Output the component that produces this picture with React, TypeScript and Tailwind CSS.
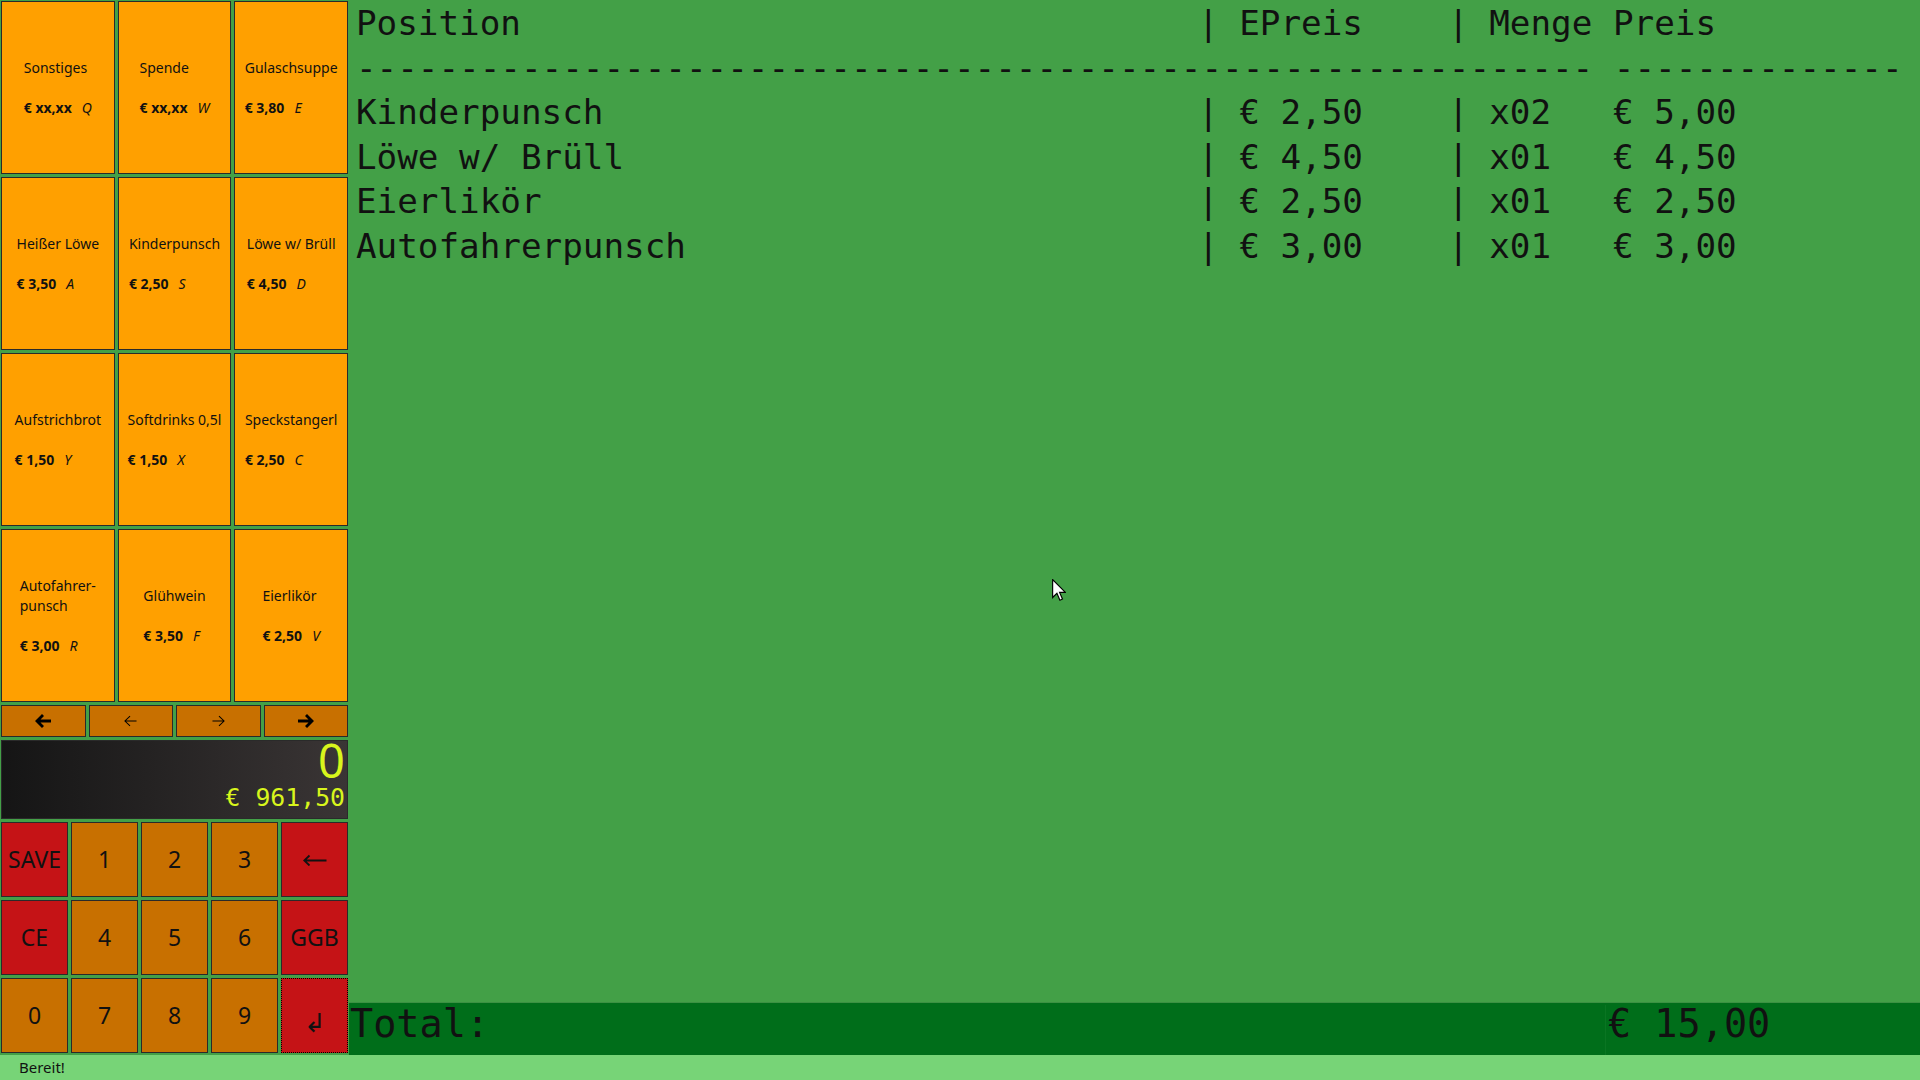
const ui = { fontFamily: '"Noto Sans", "Open Sans", sans-serif' }
const mono = { fontFamily: '"DejaVu Sans Mono", "Liberation Mono", monospace' }

const products = [
  { name: "Sonstiges", price: "€ xx,xx", key: "Q" },
  { name: "Spende", price: "€ xx,xx", key: "W" },
  { name: "Gulaschsuppe", price: "€ 3,80", key: "E" },
  { name: "Heißer Löwe", price: "€ 3,50", key: "A" },
  { name: "Kinderpunsch", price: "€ 2,50", key: "S" },
  { name: "Löwe w/ Brüll", price: "€ 4,50", key: "D" },
  { name: "Aufstrichbrot", price: "€ 1,50", key: "Y" },
  { name: "Softdrinks 0,5l", price: "€ 1,50", key: "X" },
  { name: "Speckstangerl", price: "€ 2,50", key: "C" },
  { name: "Autofahrer-\npunsch", price: "€ 3,00", key: "R" },
  { name: "Glühwein", price: "€ 3,50", key: "F" },
  { name: "Eierlikör", price: "€ 2,50", key: "V" },
]

const lines = [
  { name: "Kinderpunsch", ep: "€ 2,50", qty: "x02", total: "€ 5,00" },
  { name: "Löwe w/ Brüll", ep: "€ 4,50", qty: "x01", total: "€ 4,50" },
  { name: "Eierlikör", ep: "€ 2,50", qty: "x01", total: "€ 2,50" },
  { name: "Autofahrerpunsch", ep: "€ 3,00", qty: "x01", total: "€ 3,00" },
]

// receipt line: name | unit price | qty + price
function Line({ name, ep, rest }: { name: string; ep: string; rest: string }) {
  return (
    <div className="flex">
      <span className="w-[842px] shrink-0">{name}</span>
      <span className="w-[250px] shrink-0">{"| " + ep}</span>
      <span>{"| " + rest}</span>
    </div>
  )
}

function BoldArrow({ flip }: { flip?: boolean }) {
  return (
    <svg width="16" height="14" viewBox="0 0 16 14" className={flip ? "rotate-180" : ""}>
      <path d="M0 7 L7 0 L9 2 L5.5 5.5 H16 V8.5 H5.5 L9 12 L7 14 Z" fill="#000" />
    </svg>
  )
}

function ThinArrow({ flip }: { flip?: boolean }) {
  return (
    <svg width="13" height="12" viewBox="0 0 14 12" className={flip ? "rotate-180" : ""}>
      <path d="M13.5 6 H1 M6.5 0.7 L1 6 L6.5 11.3" fill="none" stroke="#000" strokeWidth="1.1" />
    </svg>
  )
}

function Key({ label, red, children }: { label?: string; red?: boolean; children?: React.ReactNode }) {
  return (
    <div
      className={`flex items-center justify-center border border-[#2a2a2a] ${red ? "bg-[#c51316]" : "bg-[#c87000]"} text-[23px] text-[#111]`}
      style={ui}
    >
      {children ?? label}
    </div>
  )
}

export default function App() {
  return (
    <div className="relative flex h-screen w-full flex-col overflow-hidden bg-[#43a047]">
      <div className="flex h-[1055px]">
        {/* left panel */}
        <div className="flex w-[348px] shrink-0 flex-col pl-[1px] pt-[1px]">
          <div className="grid grid-cols-3 gap-[3px]">
            {products.map((p) => (
              <div
                key={p.name}
                className="flex h-[173px] items-center justify-center border border-[#2a2a2a] bg-[#ffa000] text-[14px] leading-[20px] text-[#111]"
                style={ui}
              >
                <div className="text-left">
                  <div className="whitespace-pre">{p.name}</div>
                  <div className="mt-5 flex">
                    <span className="font-bold">{p.price}</span>
                    <span className="ml-2.5 italic">{p.key}</span>
                  </div>
                </div>
              </div>
            ))}
          </div>

          <div className="mt-[3px] grid h-[32px] grid-cols-4 gap-[3px]">
            <div className="flex items-center justify-center border border-[#2a2a2a] bg-[#c87000]"><BoldArrow /></div>
            <div className="flex items-center justify-center border border-[#2a2a2a] bg-[#c87000]"><ThinArrow /></div>
            <div className="flex items-center justify-center border border-[#2a2a2a] bg-[#c87000]"><ThinArrow flip /></div>
            <div className="flex items-center justify-center border border-[#2a2a2a] bg-[#c87000]"><BoldArrow flip /></div>
          </div>

          <div className="mt-[3px] flex h-[79px] flex-col items-end border border-[#2a2a2a] bg-gradient-to-r from-[#151515] to-[#3a3535] pr-[2px]">
            <div className="mt-[-3px] text-[47px] leading-[44px] font-normal text-[#d8f51c]" style={ui}>0</div>
            <div className="mt-[3px] text-[24.8px] leading-[26px] text-[#d8f51c]" style={mono}>€ 961,50</div>
          </div>

          <div className="mt-[3px] grid flex-1 grid-cols-5 grid-rows-3 gap-[3px] pb-[2px]">
            <Key label="SAVE" red />
            <Key label="1" />
            <Key label="2" />
            <Key label="3" />
            <Key red>
              <svg width="24" height="12" viewBox="0 0 24 12">
                <path d="M23.5 6.5 H1.5 M6.5 1.5 L1.2 6.5 L6.5 11.5" fill="none" stroke="#111" strokeWidth="1.8" />
              </svg>
            </Key>
            <Key label="CE" red />
            <Key label="4" />
            <Key label="5" />
            <Key label="6" />
            <Key label="GGB" red />
            <Key label="0" />
            <Key label="7" />
            <Key label="8" />
            <Key label="9" />
            <div className="flex items-center justify-center border border-dotted border-black bg-[#c51316] pt-[14px] text-[26px] text-[#111]" style={ui}>
              ↲
            </div>
          </div>
        </div>

        {/* receipt */}
        <div className="flex flex-1 flex-col pl-[1px]">
          <div className="flex-1 pl-[7px] text-[34.25px] leading-[44.5px] text-[#111] whitespace-pre" style={mono}>
            <div className="mt-[1px]">
              <Line name="Position" ep="EPreis" rest="Menge Preis" />
            </div>
            <div>{"-".repeat(60) + " " + "-".repeat(14)}</div>
            {lines.map((l) => (
              <Line key={l.name} name={l.name} ep={l.ep} rest={l.qty + "   " + l.total} />
            ))}
          </div>
          <div className="flex h-[53px] border-t border-[#3b9142] bg-[#006e1a] pt-[2px] text-[38.5px] leading-none text-[#111]" style={mono}>
            <div className="flex-1 pl-[1px]">Total:</div>
            <div className="w-[315px] border-l border-[#0a7522] pl-[2px]">€ 15,00</div>
          </div>
        </div>
      </div>

      <div className="flex h-[25px] items-center bg-[#77d477] pl-[19px] text-[15px] text-[#111]" style={ui}>
        Bereit!
      </div>

      {/* mouse pointer */}
      <svg className="absolute left-[1052px] top-[579px]" width="14" height="22" viewBox="0 0 12 19">
        <path d="M0.5 0.5 V16 L4.2 12.4 L6.8 18.3 L9 17.3 L6.5 11.6 H11.5 Z" fill="#fff" stroke="#000" strokeWidth="1" />
      </svg>
    </div>
  )
}
